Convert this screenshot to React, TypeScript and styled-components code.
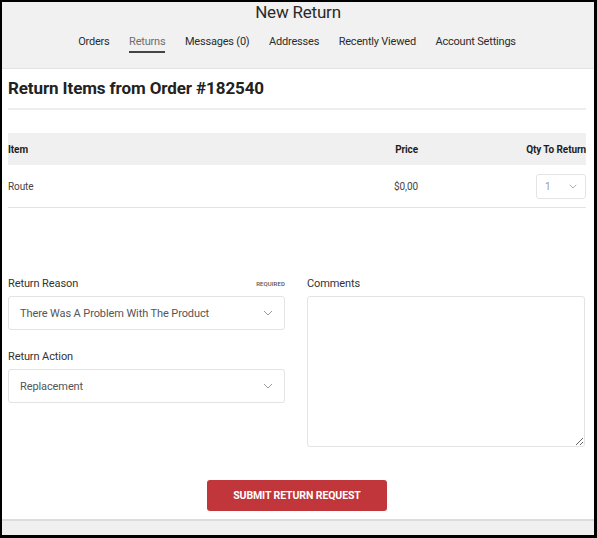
import React from "react";
import styled, { createGlobalStyle } from "styled-components";

const Global = createGlobalStyle`
  html, body { margin: 0; padding: 0; background: #000; }
  * { box-sizing: border-box; }
  body { font-family: Roboto, "Liberation Sans", sans-serif; }
`;

const Frame = styled.div`
  width: 597px;
  height: 538px;
  padding: 2px 3px 3px 2px;
  background: #000;
`;

const Page = styled.div`
  height: 100%;
  background: #f1f1f1;
  display: flex;
  flex-direction: column;
`;

const Header = styled.header`
  height: 67px;
  border-bottom: 1px solid #e2e2e2;
  display: flex;
  flex-direction: column;
  align-items: center;
`;

const PageTitle = styled.h1`
  margin: 0;
  font-size: 17px;
  line-height: 20px;
  font-weight: 400;
  color: #2a2a2a;
  letter-spacing: -0.2px;
`;

const Nav = styled.nav`
  margin-top: 13px;
  display: flex;
  gap: 19.5px;
  margin-right: 2px;
`;

const NavItem = styled.a<{ $active?: boolean }>`
  font-size: 11px;
  line-height: 14px;
  padding-bottom: 2px;
  color: ${(p) => (p.$active ? "#6e6e6e" : "#2c2c2c")};
  border-bottom: 2px solid ${(p) => (p.$active ? "#444" : "transparent")};
  letter-spacing: -0.2px;
  cursor: pointer;
`;

const Main = styled.main`
  flex: 1;
  background: #fff;
  padding: 0 8px 0 6px;
  display: flex;
  flex-direction: column;
`;

const SectionTitle = styled.h2`
  margin: 0;
  padding: 9px 0 10px;
  font-size: 17px;
  line-height: 20px;
  font-weight: 700;
  color: #222;
  border-bottom: 2px solid #eeeeee;
  letter-spacing: -0.1px;
`;

const TableRow = styled.div<{ $head?: boolean }>`
  display: grid;
  grid-template-columns: 1fr 100px 168px;
  align-items: center;
  height: ${(p) => (p.$head ? "32px" : "43px")};
  background: ${(p) => (p.$head ? "#f0f0f0" : "#fff")};
  border-bottom: ${(p) => (p.$head ? "none" : "1px solid #e3e3e3")};
  margin-top: ${(p) => (p.$head ? "23px" : "0")};
`;

const Cell = styled.div<{ $head?: boolean; $align?: string }>`
  font-size: 10px;
  font-weight: ${(p) => (p.$head ? 700 : 400)};
  color: ${(p) => (p.$head ? "#1e1e1e" : "#444")};
  display: flex;
  justify-content: ${(p) => (p.$align === "right" ? "flex-end" : "flex-start")};
  letter-spacing: -0.1px;
`;

const QtySelect = styled.div`
  width: 50px;
  height: 25px;
  border: 1px solid #e4e4e4;
  border-radius: 3px;
  display: flex;
  align-items: center;
  justify-content: space-between;
  padding: 0 8px;
  font-size: 10px;
  color: #999;
`;

const FormGrid = styled.div`
  margin-top: 68px;
  display: grid;
  grid-template-columns: 277px 278px;
  column-gap: 22px;
`;

const Column = styled.div`
  display: flex;
  flex-direction: column;
`;

const LabelRow = styled.div`
  display: flex;
  justify-content: space-between;
  align-items: center;
  height: 14px;
  margin-bottom: 6px;
`;

const Label = styled.label`
  font-size: 11px;
  color: #333;
  letter-spacing: -0.1px;
`;

const Required = styled.span`
  font-size: 6px;
  font-weight: 500;
  color: #555;
  letter-spacing: 0.1px;
`;

const SelectBox = styled.div`
  height: 34px;
  border: 1px solid #e3e3e3;
  border-radius: 3px;
  display: flex;
  align-items: center;
  justify-content: space-between;
  padding: 0 11px;
  font-size: 11px;
  color: #555;
  margin-bottom: 19px;
  letter-spacing: -0.1px;
`;

const TextArea = styled.textarea`
  height: 151px;
  border: 1px solid #e3e3e3;
  border-radius: 3px;
  resize: vertical;
  font-family: inherit;
  outline: none;
`;

const ButtonRow = styled.div`
  margin-top: 33px;
  display: flex;
  justify-content: center;
`;

const SubmitButton = styled.button`
  width: 180px;
  height: 31px;
  background: #c0363a;
  color: #fff;
  border: none;
  border-radius: 3px;
  font-family: inherit;
  font-size: 10.5px;
  font-weight: 700;
  letter-spacing: -0.1px;
  cursor: pointer;
`;

const Footer = styled.div`
  height: 16px;
  border-top: 2px solid #dcdcdc;
  background: #f0f0f0;
`;

const Chevron = ({ size = 10 }: { size?: number }) => (
  <svg width={size} height={size * 0.6} viewBox="0 0 10 6" fill="none">
    <path d="M1 1l4 4 4-4" stroke="#9a9a9a" strokeWidth="1" />
  </svg>
);

export default function App() {
  const nav = ["Orders", "Returns", "Messages (0)", "Addresses", "Recently Viewed", "Account Settings"];
  return (
    <>
      <Global />
      <Frame>
        <Page>
          <Header>
            <PageTitle>New Return</PageTitle>
            <Nav>
              {nav.map((n) => (
                <NavItem key={n} $active={n === "Returns"}>
                  {n}
                </NavItem>
              ))}
            </Nav>
          </Header>
          <Main>
            <SectionTitle>Return Items from Order #182540</SectionTitle>
            <TableRow $head>
              <Cell $head>Item</Cell>
              <Cell $head $align="right">Price</Cell>
              <Cell $head $align="right">Qty To Return</Cell>
            </TableRow>
            <TableRow>
              <Cell>Route</Cell>
              <Cell $align="right">$0,00</Cell>
              <Cell $align="right">
                <QtySelect>
                  <span>1</span>
                  <Chevron size={8} />
                </QtySelect>
              </Cell>
            </TableRow>
            <FormGrid>
              <Column>
                <LabelRow>
                  <Label>Return Reason</Label>
                  <Required>REQUIRED</Required>
                </LabelRow>
                <SelectBox>
                  <span>There Was A Problem With The Product</span>
                  <Chevron />
                </SelectBox>
                <LabelRow>
                  <Label>Return Action</Label>
                </LabelRow>
                <SelectBox>
                  <span>Replacement</span>
                  <Chevron />
                </SelectBox>
              </Column>
              <Column>
                <LabelRow>
                  <Label>Comments</Label>
                </LabelRow>
                <TextArea />
              </Column>
            </FormGrid>
            <ButtonRow>
              <SubmitButton>SUBMIT RETURN REQUEST</SubmitButton>
            </ButtonRow>
          </Main>
          <Footer />
        </Page>
      </Frame>
    </>
  );
}
